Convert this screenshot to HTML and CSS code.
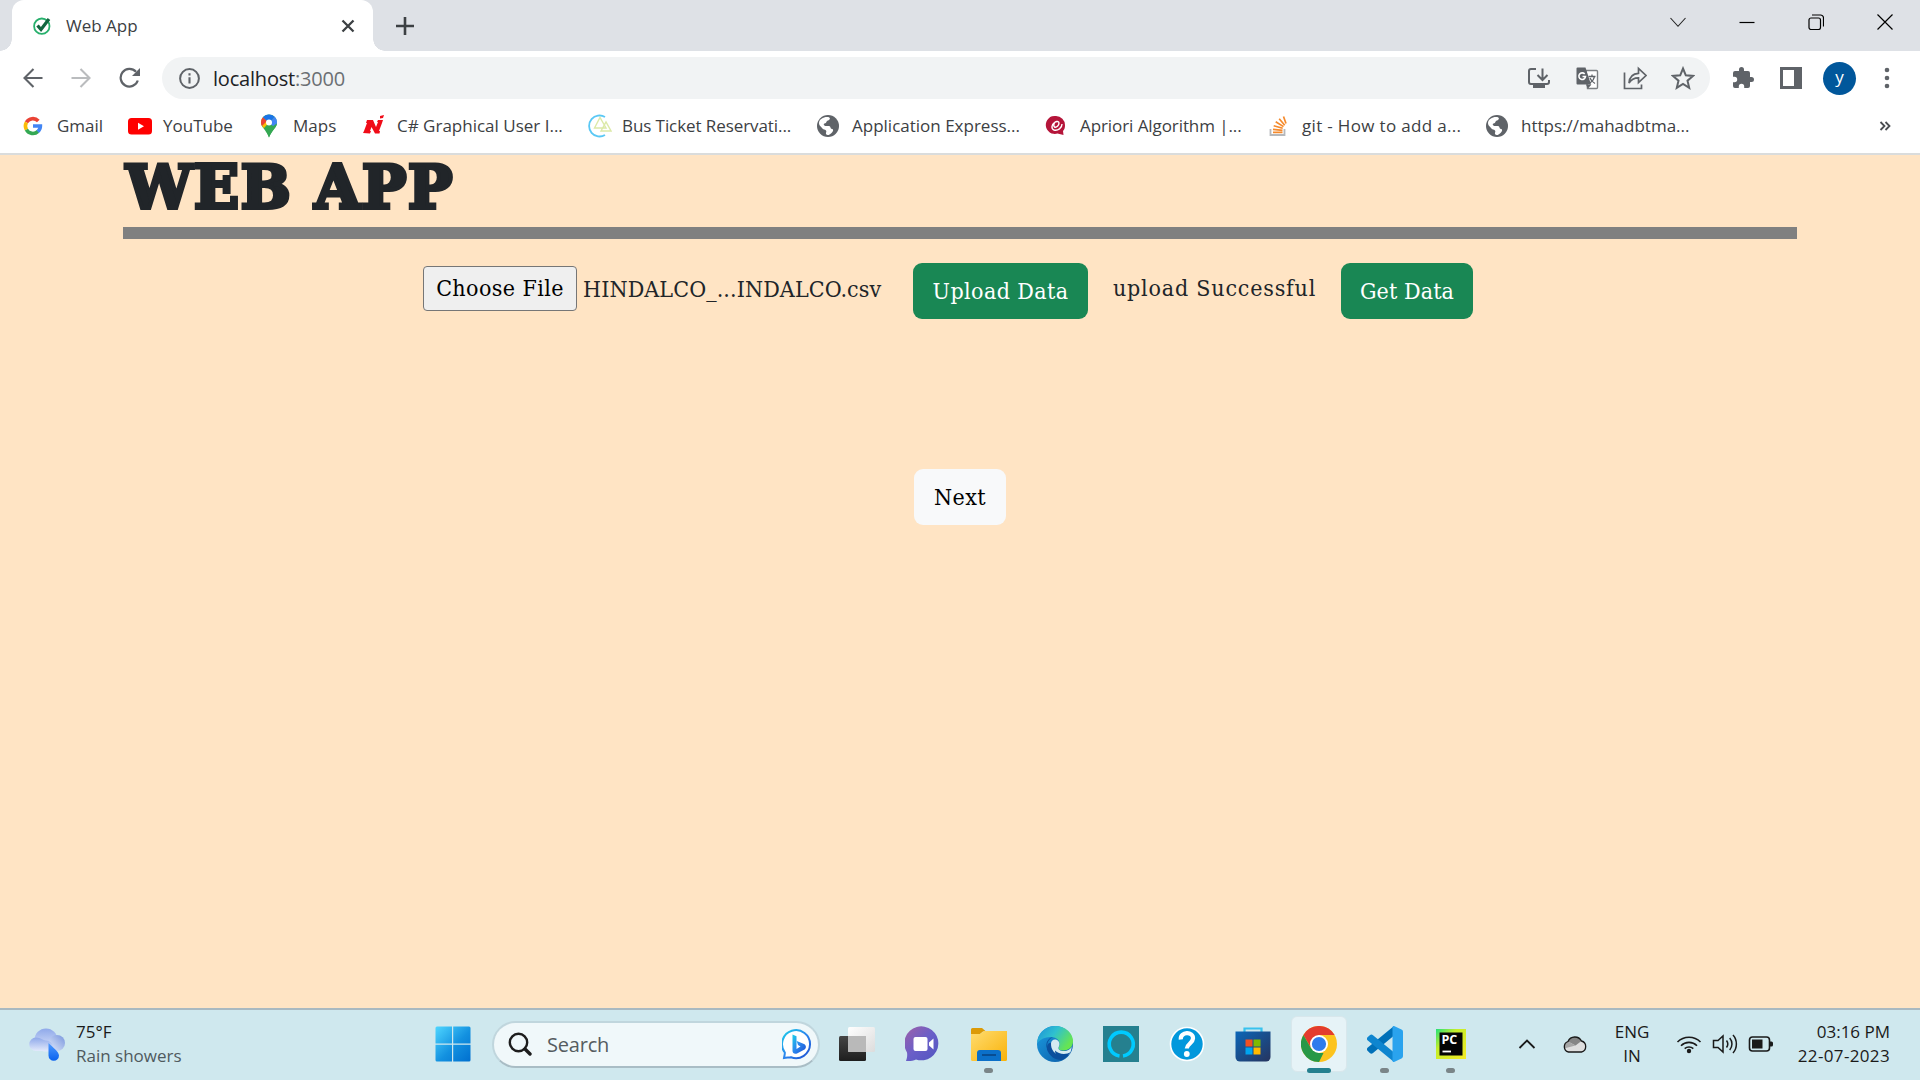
FILE: index.html
```html
<!DOCTYPE html>
<html lang="en">
<head>
<meta charset="utf-8">
<title>Web App</title>
<link rel="stylesheet" href="styles.css">
</head>
<body>
<svg width="0" height="0" class="defs">
  <defs>
    <symbol id="globe" viewBox="0 0 24 24"><circle cx="12" cy="12" r="11" fill="#5f6368"/><path d="M3 9C3 5 8 2.500 12 3c3 .4 2 3 0 3.500-2 .5-1 2.500-3.500 3C7 10 8 12 10 12h3c2 0 1 3 3 3 1.500 0 1.500 2 0 3.500C14 21 11 22 10 20c-.5-1.500 1-2 0-3.500-1-1.300-3-.8-4-2.500-.8-1.500-3-2-3-5z" fill="#fff"/><path d="M15 6c2-1 4 0 5 3 .8 2-1 3-2 2-1.500-1.500-4-2-3-5z" fill="#5f6368"/></symbol>
    <linearGradient id="win" x1="0" y1="0" x2="1" y2="1"><stop offset="0" stop-color="#4fd6ff"/><stop offset=".55" stop-color="#1391e0"/><stop offset="1" stop-color="#006fcf"/></linearGradient>
    <linearGradient id="cloudA" x1="0" y1="0" x2="0" y2="1"><stop offset="0" stop-color="#8fa9ea"/><stop offset="1" stop-color="#e2e9fb"/></linearGradient>
    <linearGradient id="cloudB" x1="1" y1="0" x2="0" y2="1"><stop offset="0" stop-color="#7795dd"/><stop offset="1" stop-color="#e4ebfb"/></linearGradient>
    <linearGradient id="drop" x1="0" y1="0" x2="0" y2="1"><stop offset="0" stop-color="#4f9bff"/><stop offset="1" stop-color="#0a62ee"/></linearGradient>
    <linearGradient id="bing" x1="0" y1="0" x2="1" y2="1"><stop offset="0" stop-color="#1ccfe8"/><stop offset=".5" stop-color="#2b86ee"/><stop offset="1" stop-color="#1c4fd0"/></linearGradient>
    <linearGradient id="chat" x1="0" y1="0" x2="1" y2="1"><stop offset="0" stop-color="#a060a8"/><stop offset=".5" stop-color="#6a5fc8"/><stop offset="1" stop-color="#5055c0"/></linearGradient>
    <linearGradient id="folder" x1="0" y1="0" x2="1" y2="1"><stop offset="0" stop-color="#ffdc70"/><stop offset="1" stop-color="#f9b208"/></linearGradient>
    <linearGradient id="edgeTop" x1="0" y1="0" x2="1" y2=".5"><stop offset="0" stop-color="#1b8fd8"/><stop offset=".5" stop-color="#2fc0d0"/><stop offset="1" stop-color="#66e552"/></linearGradient>
    <linearGradient id="edgeLow" x1="0" y1="0" x2="1" y2="1"><stop offset="0" stop-color="#1b9de2"/><stop offset="1" stop-color="#0c59a4"/></linearGradient>
    <linearGradient id="store" x1="0" y1="0" x2="1" y2="1"><stop offset="0" stop-color="#0c66b8"/><stop offset="1" stop-color="#26345e"/></linearGradient>
    <linearGradient id="tvFront" x1="0" y1="0" x2="1" y2="1"><stop offset="0" stop-color="#fff"/><stop offset="1" stop-color="#dcdcdc"/></linearGradient>
    <linearGradient id="tvBack" x1="0" y1="0" x2="0" y2="1"><stop offset="0" stop-color="#454545"/><stop offset="1" stop-color="#1e1e1e"/></linearGradient>
    <linearGradient id="pc" x1="0" y1="0" x2="1" y2="1"><stop offset="0" stop-color="#21e07a"/><stop offset=".35" stop-color="#c4ee2a"/><stop offset="1" stop-color="#f4ea26"/></linearGradient>
  </defs>
</svg>

<header class="browser">
  <div class="tabstrip">
    <div class="tab">
      <svg class="tab-icon" width="18" height="18" viewBox="0 0 18 18"><circle cx="8.800" cy="9.200" r="7.700" fill="none" stroke="#27b06c" stroke-width="1.800"/><path d="M4.500 8.500l3.500 4L16 2" fill="none" stroke="#12653f" stroke-width="3.200"/></svg>
      <span class="tab-title">Web App</span>
      <svg width="14" height="14" viewBox="0 0 14 14"><path d="M1.500 1.500l11 11M12.500 1.500l-11 11" stroke="#3c4043" stroke-width="2.300"/></svg>
    </div>
    <svg class="new-tab" width="18" height="18" viewBox="0 0 18 18"><path d="M9 0v18M0 9h18" stroke="#3c4043" stroke-width="2.600"/></svg>
    <div class="window-controls">
      <svg width="16" height="16" viewBox="0 0 16 16"><path d="M.5 4L8 12.300 15.500 4" fill="none" stroke="#222" stroke-width="1.100"/></svg>
      <svg width="16" height="16" viewBox="0 0 16 16"><path d="M.5 8.500h15" stroke="#000" stroke-width="1.200"/></svg>
      <svg width="16" height="16" viewBox="0 0 16 16"><g fill="none" stroke="#000" stroke-width="1.200"><rect x="1" y="4" width="11.500" height="11.500" rx="2"/><path d="M4 1h8.500a3 3 0 0 1 3 3v8.500"/></g></svg>
      <svg width="16" height="16" viewBox="0 0 16 16"><path d="M.5.5l15 15M15.500.5l-15 15" stroke="#000" stroke-width="1.200"/></svg>
    </div>
  </div>

  <div class="toolbar">
    <div class="nav">
      <svg width="20" height="20" viewBox="0 0 20 20"><path d="M19.500 10H2M10.500 1L1.500 10l9 9" fill="none" stroke="#5f6368" stroke-width="2.100"/></svg>
      <svg width="20" height="20" viewBox="0 0 20 20"><path d="M.5 10H18M9.500 1l9 9-9 9" fill="none" stroke="#babcbe" stroke-width="2.100"/></svg>
      <svg width="22" height="22" viewBox="0 0 22 22"><path d="M18.800 13.500A8.800 8.800 0 1 1 17 4.800" fill="none" stroke="#5f6368" stroke-width="2.200"/><path d="M21 1v8h-8z" fill="#5f6368"/></svg>
    </div>
    <div class="omnibox">
      <svg class="info" width="21" height="21" viewBox="0 0 21 21"><circle cx="10.500" cy="10.500" r="9.400" fill="none" stroke="#5f6368" stroke-width="2"/><path d="M10.500 9.200v6.300M10.500 5.300v2.200" stroke="#5f6368" stroke-width="2.100"/></svg>
      <span class="url">localhost<span class="port">:3000</span></span>
      <div class="omni-actions">
        <svg width="24" height="24" viewBox="0 0 24 24"><g fill="none" stroke="#5f6368" stroke-width="2"><path d="M9 3H4a2 2 0 0 0-2 2v11a2 2 0 0 0 2 2h16a2 2 0 0 0 2-2v-2"/><path d="M15.500 2.500v11M10.500 9l5 5 5-5"/></g><path d="M6 18h12v4H6z" fill="#5f6368"/></svg>
        <svg width="24" height="24" viewBox="0 0 24 24"><path d="M11 4.500h10.500a1 1 0 0 1 1 1v16a1 1 0 0 1-1 1h-9z" fill="#fff" stroke="#7d8083" stroke-width="1.400"/><path d="M1.500 2.500a1 1 0 0 1 1-1h8l5.500 17h-13.500a1 1 0 0 1-1-1z" fill="#5f6368"/><path d="M11 18.500l2 4 3.500-4z" fill="#5f6368"/><path d="M9.700 8A3.300 3.300 0 1 0 10.500 10.500H7.500" fill="none" stroke="#fff" stroke-width="1.600"/><path d="M13.500 10.500h7M17 8.500v2M19.500 10.500c-.5 3-2.500 5-4.500 6.500M15 12c.7 2 2.500 4 5 5.500" fill="none" stroke="#5f6368" stroke-width="1.300"/></svg>
        <svg width="24" height="24" viewBox="0 0 24 24"><g fill="none" stroke="#5f6368" stroke-width="1.700"><path d="M1.500 6.500v16h17v-4"/><path d="M6 17c.5-6 4-9.500 9.500-9.700V2.500l7.500 7-7.500 7v-4.700C11 11.800 8 13.500 6 17z"/></g></svg>
        <svg width="24" height="24" viewBox="0 0 24 24"><path d="M12 2.500l2.800 6.800 7.200.6-5.500 4.800 1.700 7.100-6.200-3.800-6.200 3.800 1.700-7.100L2 9.900l7.200-.6z" fill="none" stroke="#5f6368" stroke-width="2"/></svg>
      </div>
    </div>
    <div class="extensions">
      <svg width="24" height="24" viewBox="0 0 24 24"><path d="M20.500 11H19V7a2 2 0 0 0-2-2h-4V3.500a2.500 2.500 0 0 0-5 0V5H4a2 2 0 0 0-2 2v3.800h1.500a2.700 2.700 0 0 1 0 5.400H2V20a2 2 0 0 0 2 2h3.800v-1.500a2.700 2.700 0 0 1 5.400 0V22H17a2 2 0 0 0 2-2v-4h1.500a2.500 2.500 0 0 0 0-5z" fill="#5f6368"/></svg>
      <svg width="22" height="22" viewBox="0 0 22 22"><path d="M0 0h22v22H0zM3 3v16h11V3z" fill="#5f6368" fill-rule="evenodd"/></svg>
      <span class="avatar">y</span>
      <svg width="6" height="22" viewBox="0 0 6 22"><g fill="#5f6368"><circle cx="3" cy="3" r="2.300"/><circle cx="3" cy="11" r="2.300"/><circle cx="3" cy="19" r="2.300"/></g></svg>
    </div>
  </div>

  <nav class="bookmarks">
    <a class="bookmark"><svg width="24" height="24" viewBox="0 0 24 24"><g fill="none" stroke-width="3.600"><path d="M5.400 8.400A7.400 7.400 0 0 1 17.300 7" stroke="#ea4335"/><path d="M5.400 15.600a7.400 7.400 0 0 1 0-7.200" stroke="#fbbc05"/><path d="M17 17.400A7.400 7.400 0 0 1 5.400 15.600" stroke="#34a853"/><path d="M12 12h7.400a7.400 7.400 0 0 1-2.600 5.600" stroke="#4285f4"/></g></svg><span>Gmail</span></a>
    <a class="bookmark"><svg width="26" height="24" viewBox="0 0 26 24"><rect x="1" y="4" width="24" height="16.500" rx="3.500" fill="#f00"/><path d="M11 8.800v7l6-3.500z" fill="#fff"/></svg><span>YouTube</span></a>
    <a class="bookmark"><svg width="24" height="24" viewBox="0 0 24 24"><path d="M12 .5a8 8 0 0 1 8 8c0 5-5.500 7.500-8 15-2.500-7.500-8-10-8-15a8 8 0 0 1 8-8z" fill="#34a853"/><path d="M6 3.200L4.500 6c-1 3 0 5.500 2.300 8.300L12 8.500z" fill="#fbbc04"/><path d="M6 3.200C4.500 5 4 6 4 8.500c0 1.500.5 2.500 1 3.500L10 7z" fill="#ea4335"/><path d="M6 3.200C9 0 14-.5 17.500 2.800L12 9z" fill="#1a73e8"/><path d="M17.500 2.800C19.500 4.500 20 6.500 20 8.500c0 2-1 3.500-2 5L12 9z" fill="#4285f4"/><path d="M19.800 9.500c0 4-5.300 7.500-7.800 14-.7-2.500-2-5-3.400-6.500z" fill="#34a853"/><circle cx="12" cy="8.500" r="3" fill="#fff"/></svg><span>Maps</span></a>
    <a class="bookmark"><svg width="26" height="24" viewBox="0 0 26 24"><path d="M2 19l1-2 3-8H5l1-3h6l3 7 2-5h-1l1-2h5l-1 3-3 8h1l-.5 2.500H14L10.500 13 9 17h1l-1 2.500z" fill="#f00c18"/><path d="M19 2l4-1-1 3-3 .6z" fill="#f00c18"/></svg><span>C# Graphical User I...</span></a>
    <a class="bookmark"><svg width="26" height="24" viewBox="-1 0 26 24"><path d="M18 21A10.500 10.500 0 1 1 18 3" fill="none" stroke="#5ac8f5" stroke-width="1.800"/><path d="M7.500 14L13 3.500l6 10.500zM14 17l5-9 5 9z" fill="none" stroke="#dce9a8" stroke-width="1.400"/></svg><span class="bus">Bus Ticket Reservati...</span></a>
    <a class="bookmark"><svg width="24" height="24"><use href="#globe"/></svg><span>Application Express...</span></a>
    <a class="bookmark"><svg width="24" height="24" viewBox="-1 0 24 24"><path d="M11 2a9 9 0 0 1 9 9c0 3-.5 4.500-2 6l.5 4-6-1.500A9 9 0 1 1 11 2z" fill="#b5153a"/><path d="M11.500 7.500C9 8 8 11.500 9.500 13c2 1 4.500-1.500 4.500-4 0-2-2.500-2-4.500-.5-3 2-3.500 6.500-.5 7.500 4 1 8-2 8-6" fill="none" stroke="#fff" stroke-width="1.400"/></svg><span class="apriori">Apriori Algorithm |...</span></a>
    <a class="bookmark"><svg width="24" height="24" viewBox="0 0 24 24"><path d="M4.500 15v6h14v-6" fill="none" stroke="#b5b8bc" stroke-width="1.800"/><path d="M7 18.300h9.500M7 15.300l9.500 1M7.700 11.800l9 2.500M9.700 7.800l7.800 4.800M13.200 4.700l5.500 6.500M17.500 2.500l2.500 7" stroke="#f58a2c" stroke-width="1.700"/></svg><span class="git">git - How to add a...</span></a>
    <a class="bookmark"><svg width="24" height="24"><use href="#globe"/></svg><span>https://mahadbtma...</span></a>
    <svg class="more" width="12" height="10" viewBox="0 0 12 10"><path d="M1.500 1l4 4-4 4M6.500 1l4 4-4 4" fill="none" stroke="#4a4d51" stroke-width="1.800"/></svg>
  </nav>
</header>

<main class="page">
  <h1 class="title">WEB APP</h1>
  <div class="rule"></div>
  <div class="upload-row">
    <div class="file-input">
      <button class="choose">Choose File</button>
      <span class="filename">HINDALCO_...INDALCO.csv</span>
    </div>
    <button class="btn success upload">Upload Data</button>
    <span class="status">upload Successful</span>
    <button class="btn success get">Get Data</button>
  </div>
  <button class="btn light">Next</button>
</main>

<footer class="taskbar">
  <div class="weather">
    <svg width="38" height="36" viewBox="0 0 38 36"><circle cx="18" cy="14" r="11.500" fill="url(#cloudA)"/><circle cx="29" cy="17" r="8" fill="url(#cloudB)"/><path d="M8 11.500c5 0 7 3 9.500 3 3 0 5 1.500 7 3.500V25H8a6.700 6.700 0 0 1 0-13.500z" fill="url(#cloudA)"/><path d="M20.500 17c5 5 10.500 9 10.500 12.500a5.200 5.200 0 0 1-10.500 0z" fill="url(#drop)"/></svg>
    <div class="two-line"><span>75°F</span><span class="condition">Rain showers</span></div>
  </div>
  <svg class="start" width="36" height="36" viewBox="0 0 36 36"><g fill="url(#win)"><path d="M2 .5h15v17H.5V2A1.500 1.500 0 0 1 2 .5zM18.200.5H34A1.500 1.500 0 0 1 35.500 2v15.500H18.200zM.5 18.700H17v16.800H2A1.500 1.500 0 0 1 .5 34zM18.200 18.700h17.300V34a1.500 1.500 0 0 1-1.500 1.500H18.200z"/></g></svg>
  <div class="search">
    <svg width="24" height="24" viewBox="0 0 24 24"><circle cx="10.500" cy="10.500" r="8.700" fill="none" stroke="#1d1d1d" stroke-width="2.400"/><path d="M17 17l5 5" stroke="#1d1d1d" stroke-width="3.400" stroke-linecap="round"/></svg>
    <span class="search-text">Search</span>
    <svg width="32" height="32" viewBox="0 0 32 32"><path d="M2 30c.4-2.500 1-4 .8-5.500A14 14 0 1 1 9 29.200C7 29.700 5 29.500 2 30z" fill="#fff" stroke="url(#bing)" stroke-width="2"/><path d="M10.500 6.500l4 1.800V21l4-2.500-2.500-1.500-1.300-4 7.300 3c2.500 1.500 2.500 4 .5 5.500L15 25.500c-2.500 1-4.500-.5-4.500-2.500z" fill="url(#bing)"/></svg>
  </div>
  <div class="apps">
    <div class="app"><svg width="36" height="36" viewBox="0 0 36 36"><rect x="0" y="10" width="27" height="25" rx="1.500" fill="url(#tvBack)"/><rect x="9" y="1" width="27" height="25" rx="1.500" fill="url(#tvFront)"/><path d="M9 10h18v16H10.500A1.500 1.500 0 0 1 9 24.500z" fill="#b9b9b9"/></svg></div>
    <div class="app"><svg width="36" height="36" viewBox="0 0 36 36"><path d="M1 35c1-3 1.500-5 1-8.500A17 17 0 1 1 11 33.500C8 35 5 35.200 1 35z" fill="url(#chat)"/><rect x="8.500" y="11" width="14" height="14" rx="2" fill="#fff"/><path d="M24 16.500l4.500-4v11l-4.500-4z" fill="#fff"/></svg></div>
    <div class="app running"><svg width="36" height="36" viewBox="0 0 36 36"><path d="M0 3.500A1.500 1.500 0 0 1 1.500 2H11l4 3.500H12L9 8H0z" fill="#dc9a06"/><path d="M0 8h9l4-3h23v28.500a1.500 1.500 0 0 1-1.500 1.500h-33A1.500 1.500 0 0 1 0 33.500z" fill="url(#folder)"/><path d="M6 35V27a3 3 0 0 1 3-3h18a3 3 0 0 1 3 3v8z" fill="#0b70c9"/><path d="M11 29h14" stroke="#084a8c" stroke-width="1.800"/></svg></div>
    <div class="app"><svg width="36" height="36" viewBox="0 0 36 36"><circle cx="18" cy="18" r="18" fill="url(#edgeLow)"/><path d="M1 12C4 4 11 0 18 0c11 0 18 7.500 18 15 0 6-4 9.500-9.500 9.500-3 0-5.500-1-5-2.500 3.500-6.500-1.500-11-8-11-5.500 0-10 2-13.300 6z" fill="url(#edgeTop)"/><path d="M10 21c0-5 2.500-8.500 6-10-5 1-8 6-6 12 2 7.500 9 11.500 15 11 4-1.500 8-6.500 8.500-9-4 4-10 3.500-13.500 1-2.500-1.800-3.500-4-2.500-8-5-3-9 0-7 8z" fill="#0b4f9d"/><path d="M14 17.500c0-3 3-5 6-3.500 3.500 2 2.500 5.500 1.500 7.500-.6 2 2 3.500 5 3.500 4.500 0 7-2 8.500-4.500L33 28c-6 2.500-13 2-16.500-2.500-2-2.500-2.500-5-2.500-8z" fill="#d5ebf1"/><path d="M25 32c4-1 7-3 9-6-5 3-12 2.500-16-1.500 0 4 3 7 7 7.500z" fill="#0b4f9d"/></svg></div>
    <div class="app"><svg width="36" height="36" viewBox="0 0 36 36"><path d="M0 0h36v36H0z" fill="#25808f"/><path d="M16.500 30A12 12 0 1 1 20 30" fill="none" stroke="#00caff" stroke-width="3.600"/></svg></div>
    <div class="app"><svg width="36" height="36" viewBox="0 0 36 36"><circle cx="18" cy="18" r="16.500" fill="#0298dc" stroke="#fff" stroke-width="1.600"/><path d="M11.800 13.500C11 5.500 24.500 5 24 12.500c-.3 5-6.200 5.500-6.200 10" fill="none" stroke="#fff" stroke-width="4.200"/><circle cx="17.800" cy="28" r="2.900" fill="#fff"/></svg></div>
    <div class="app"><svg width="36" height="36" viewBox="0 0 36 36"><path d="M9.500 7V2.500h17V7" fill="none" stroke="#38c2ee" stroke-width="2.200"/><path d="M.5 5.500h35V31a4.500 4.500 0 0 1-4.500 4.500H5A4.500 4.500 0 0 1 .5 31z" fill="url(#store)"/><path d="M10.500 13.500h7v7h-7z" fill="#f25022"/><path d="M18.500 13.500h7v7h-7z" fill="#7fba00"/><path d="M10.500 21.500h7v7h-7z" fill="#00a4ef"/><path d="M18.500 21.500h7v7h-7z" fill="#ffb900"/></svg></div>
    <div class="app active"><svg width="36" height="36" viewBox="0 0 36 36"><circle cx="18" cy="18" r="18" fill="#fcc31e"/><path d="M18 9h15.600A18 18 0 0 0 2.400 9l8 13.500z" fill="#e33b2e"/><path d="M2.400 9l7.800 13.500L18 27h4.500L18 36A18 18 0 0 1 2.400 9z" fill="#279847"/><circle cx="18" cy="18" r="9" fill="#fff"/><circle cx="18" cy="18" r="7.100" fill="#2f7bed"/></svg></div>
    <div class="app running"><svg width="36" height="36" viewBox="0 0 36 36"><path d="M27 0l-.5 10L6 27a2.500 2.500 0 0 1-3.200 0L.8 25a2.300 2.300 0 0 1 0-3.400z" fill="#0070b8"/><path d="M27 36l-.5-10L6 9.200a2.500 2.500 0 0 0-3.200 0L.8 11.100a2.300 2.300 0 0 0 0 3.400z" fill="#0e85cf"/><path d="M27 0l7.500 3.500A2.500 2.500 0 0 1 36 5.700v24.600a2.500 2.500 0 0 1-1.500 2.200L27 36c-1 .2-1.500-.5-1.500-1.500v-33C25.500.5 26 0 27 0z" fill="#2aa3ee"/></svg></div>
    <div class="app running"><svg width="36" height="36" viewBox="0 0 36 36"><path d="M3 3h30v30H3z" fill="url(#pc)"/><path d="M6.500 6.500h23v23h-23z" fill="#050505"/><path d="M9.500 25.500h8.500" stroke="#fff" stroke-width="1.800"/><text class="pc-text" x="8.500" y="18">PC</text></svg></div>
  </div>
  <div class="tray">
    <svg class="up" width="18" height="12" viewBox="0 0 18 12"><path d="M1.500 10L9 2.500l7.500 7.500" fill="none" stroke="#1a1a1a" stroke-width="1.800"/></svg>
    <svg class="onedrive" width="26" height="20" viewBox="0 0 26 20"><path d="M6.500 18a5.500 5.500 0 0 1-.5-10.500A7.500 7.500 0 0 1 19.500 7a5.700 5.700 0 0 1 0 11z" fill="#dedede"/><path d="M6 7.500A7.500 7.500 0 0 1 19.500 7l-6 4.500z" fill="#858585"/><path d="M2 14.500C1 11 3 8 6 7.500l7.500 4z" fill="#a6a6a6"/><path d="M6.500 18a5.500 5.500 0 0 1-.5-10.500A7.500 7.500 0 0 1 19.500 7a5.700 5.700 0 0 1 0 11z" fill="none" stroke="#1a1a1a" stroke-width="1.300"/></svg>
    <div class="two-line lang"><span>ENG</span><span>IN</span></div>
    <svg class="wifi" width="26" height="20" viewBox="0 0 26 20"><g fill="none" stroke="#1a1a1a" stroke-width="1.600"><path d="M1.500 8a16.300 16.300 0 0 1 23 0M5 11.700a11.300 11.300 0 0 1 16 0M8.700 14.700a6.300 6.300 0 0 1 8.600 0"/></g><circle cx="13" cy="17" r="2.200" fill="#1a1a1a"/></svg>
    <svg class="volume" width="26" height="20" viewBox="0 0 26 20"><g fill="none" stroke="#1a1a1a" stroke-width="1.500"><path d="M1.500 6.500H6L11 2v16L6 13.500H1.500z"/><path d="M14.500 6.500c1.500 2 1.500 5 0 7M17.700 4c3 3.500 3 8.500 0 12M21 1c4.500 5 4.500 13 0 18"/></g></svg>
    <svg class="battery" width="26" height="18" viewBox="0 0 26 18"><rect x="1.500" y="2" width="20" height="14" rx="3" fill="none" stroke="#1a1a1a" stroke-width="1.600"/><path d="M4 4.500h10.500v9H4z" fill="#1a1a1a"/><path d="M22 6.500h1.500a1.500 1.500 0 0 1 1.500 1.500v2a1.500 1.500 0 0 1-1.500 1.500H22z" fill="#1a1a1a"/></svg>
    <div class="two-line clock"><span>03:16 PM</span><span class="date">22-07-2023</span></div>
  </div>
</footer>
</body>
</html>
```
FILE: styles.css
```css
* { box-sizing: border-box; }

body {
  margin: 0;
  width: 1920px;
  height: 1080px;
  display: flex;
  flex-direction: column;
  overflow: hidden;
  font-family: "Open Sans", "Noto Sans", sans-serif;
  white-space: nowrap;
  background: #ffe4c4;
}

svg { display: block; flex: none; }
.defs { position: absolute; }
button { font: inherit; letter-spacing: inherit; margin: 0; padding: 0; border: 0; }

/* Browser chrome */
.browser {
  height: 155px;
  flex: none;
  background: #fff;
  border-bottom: 2px solid #dadcdc;
}

.tabstrip {
  height: 51px;
  display: flex;
  align-items: center;
  padding-left: 12px;
  background: #dee1e6;
}

.tab {
  position: relative;
  width: 361px;
  height: 51px;
  padding: 0 18px 0 21px;
  display: flex;
  align-items: center;
  background: #fff;
  border-radius: 12px 12px 0 0;
}

.tab::before,
.tab::after {
  content: "";
  position: absolute;
  bottom: 0;
  width: 12px;
  height: 12px;
}
.tab::before { left: -12px; background: radial-gradient(circle at 0 0, #dee1e6 11.5px, #fff 12px); }
.tab::after { right: -12px; background: radial-gradient(circle at 100% 0, #dee1e6 11.5px, #fff 12px); }

.tab-icon { margin-right: 15px; }
.tab-title { flex: 1; font-size: 17px; color: #3c4043; }
.new-tab { margin-left: 23px; }

.window-controls {
  margin-left: auto;
  padding: 0 27px 8px 0;
  display: flex;
  gap: 53px;
}

.toolbar {
  height: 54px;
  display: flex;
  align-items: center;
}

.nav {
  width: 162px;
  padding-left: 23px;
  display: flex;
  align-items: center;
  gap: 28px;
}

.omnibox {
  width: 1548px;
  height: 42px;
  padding: 0 15px 0 17px;
  display: flex;
  align-items: center;
  background: #f1f3f4;
  border-radius: 21px;
}

.info { margin-right: 13px; }
.url { font-size: 20px; letter-spacing: -0.2px; color: #202124; }
.port { color: #6b6f73; }

.omni-actions {
  margin-left: auto;
  display: flex;
  gap: 24px;
}

.extensions {
  padding-left: 21px;
  display: flex;
  align-items: center;
}

.extensions > :nth-child(2) { margin-left: 25px; }

.avatar {
  width: 33px;
  height: 33px;
  margin: 0 28px 0 21px;
  border-radius: 50%;
  background: #01579b;
  color: #fff;
  font-size: 17px;
  line-height: 30px;
  text-align: center;
}

.bookmarks {
  height: 41px;
  padding-left: 21px;
  display: grid;
  grid-template-columns: 106px 130px 104px 225px 230px 228px 222px 219px 394px 12px;
  align-items: center;
  font-size: 17px;
  color: #3c4043;
}

.bookmark {
  display: grid;
  grid-template-columns: 24px auto;
  column-gap: 12px;
  align-items: center;
  justify-content: start;
}

.bookmark span { margin-top: -1px; }
.bus, .apriori { letter-spacing: -0.08px; }
.git { letter-spacing: 0.33px; }

/* Page */
.page {
  height: 853px;
  flex: none;
  padding: 0 123px;
  font-family: "DejaVu Serif Condensed", "DejaVu Serif", serif;
  font-stretch: condensed;
  font-size: 23px;
  letter-spacing: 0.4px;
  color: #212529;
}

.title {
  height: 72px;
  margin: 0;
  padding-left: 3px;
  font-family: "DejaVu Serif", serif;
  font-stretch: normal;
  font-size: 59px;
  line-height: 65px;
  font-weight: 700;
  letter-spacing: 1.7px;
  -webkit-text-stroke: 4px #212529;
}

.rule { height: 12px; background: #808080; }

.upload-row {
  margin: 24px 0 0 300px;
  height: 56px;
  display: flex;
}

.file-input {
  width: 490px;
  display: flex;
  align-items: center;
  gap: 6px;
  padding-bottom: 5px;
}

.choose {
  width: 154px;
  height: 45px;
  padding-bottom: 2px;
  background: #efefef;
  border: 1px solid #767676;
  border-radius: 4px;
  color: #000;
}

.filename { padding-top: 1px; letter-spacing: 0.1px; }

.btn {
  display: block;
  height: 56px;
  border-radius: 9px;
}

.success { background: #198754; color: #fff; }
.upload { width: 175px; }
.get { width: 132px; letter-spacing: 0.1px; }
.status { width: 253px; line-height: 50px; letter-spacing: 0.8px; text-align: center; }

.light {
  width: 92px;
  margin: 150px 0 0 791px;
  background: #f8f9fa;
  color: #000;
}

/* Taskbar */
.taskbar {
  height: 72px;
  flex: none;
  padding-bottom: 2px;
  border-top: 2px solid #a9b9c1;
  background: #cfe8ee;
  display: flex;
  align-items: center;
}

.two-line {
  display: flex;
  flex-direction: column;
  font-size: 17px;
  line-height: 24px;
  color: #1a1a1a;
}

.weather {
  width: 435px;
  padding-left: 28px;
  display: flex;
  align-items: center;
  gap: 10px;
}
.condition { color: #4f5a5e; }

.search {
  width: 328px;
  height: 47px;
  margin: 0 4px 0 21px;
  padding: 0 4px 0 14px;
  display: flex;
  align-items: center;
  background: #f0f8fa;
  border: 2px solid #c0d6dd;
  border-bottom-color: #a9bdc5;
  border-radius: 24px;
}

.search-text {
  flex: 1;
  margin-left: 15px;
  font-size: 20px;
  letter-spacing: -0.2px;
  color: #555c5f;
}

.apps { display: flex; }

.app {
  position: relative;
  width: 66px;
  height: 56px;
  display: grid;
  place-items: center;
}

.active::before {
  content: "";
  position: absolute;
  inset: 0 5px;
  background: #e6f3f7;
  border: 1px solid #d8e7ec;
  border-radius: 6px;
}
.active svg { position: relative; }

.running::after,
.active::after {
  content: "";
  position: absolute;
  bottom: -1px;
  left: 28px;
  width: 9px;
  height: 5px;
  border-radius: 3px;
  background: #7a8588;
}
.active::after { left: 21px; width: 24px; background: #25808f; }

.pc-text {
  font: 700 12.5px "Open Sans", sans-serif;
  fill: #fff;
}

.tray {
  flex: 1;
  padding: 0 30px 0 34px;
  display: flex;
  align-items: center;
}

.onedrive { margin-left: 26px; }
.lang { width: 88px; align-items: center; }
.volume { margin-left: 10px; }
.battery { margin-left: 10px; }
.clock { margin-left: auto; align-items: flex-end; }
.date { letter-spacing: 0.35px; }
```
